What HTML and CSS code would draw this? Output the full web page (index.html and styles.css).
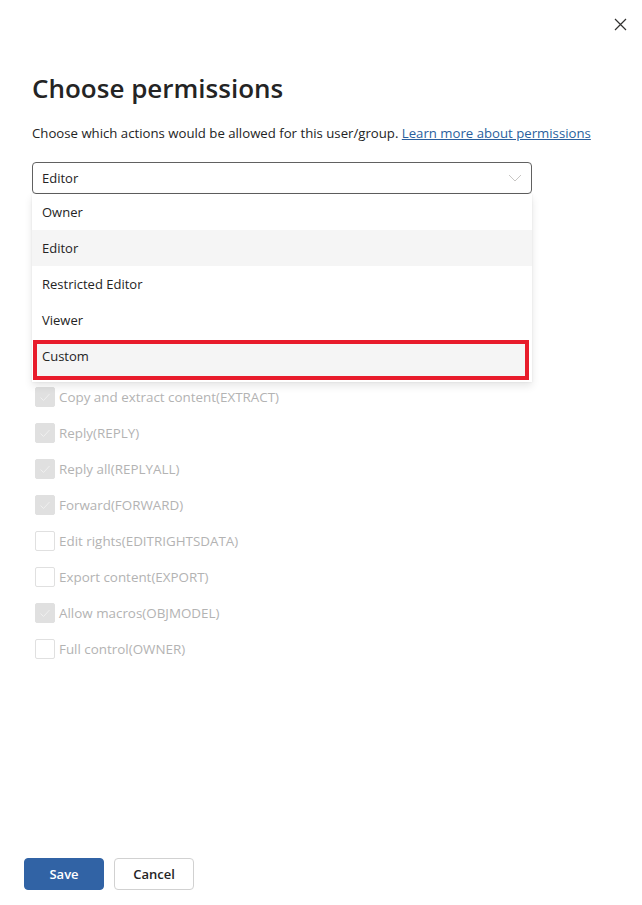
FILE: index.html
```html
<!DOCTYPE html>
<html lang="en">
<head>
<meta charset="utf-8">
<title>Choose permissions</title>
<link rel="stylesheet" href="styles.css">
</head>
<body>
<div class="dialog">
  <div class="header">
    <button class="close" aria-label="Close">
      <svg width="13" height="13" viewBox="0 0 13 13"><path d="M1 1 L12 12 M12 1 L1 12" stroke="#323130" stroke-width="1.2" fill="none"/></svg>
    </button>
  </div>
  <div class="content">
    <h1 class="title">Choose permissions</h1>
    <p class="desc">Choose which actions would be allowed for this user/group. <a class="link" href="#">Learn more about permissions</a></p>
    <div class="dropdown-wrap">
      <div class="dropdown">
        <span class="dropdown-value">Editor</span>
        <svg class="chevron" width="14" height="8" viewBox="0 0 14 8"><path d="M1 1 L7 7 L13 1" stroke="#c8c6c4" stroke-width="1" fill="none"/></svg>
      </div>
      <div class="menu">
        <div class="option">Owner</div>
        <div class="option selected">Editor</div>
        <div class="option">Restricted Editor</div>
        <div class="option">Viewer</div>
        <div class="option custom">Custom</div>
      </div>
    </div>
    <ul class="checks">
      <li class="row"><span class="box checked"><svg width="12" height="12" viewBox="0 0 12 12"><path d="M1.5 6.5 L4.5 9.5 L10.5 3" stroke="#f0f0f0" stroke-width="1" fill="none"/></svg></span><span class="label">Copy and extract content(EXTRACT)</span></li>
      <li class="row"><span class="box checked"><svg width="12" height="12" viewBox="0 0 12 12"><path d="M1.5 6.5 L4.5 9.5 L10.5 3" stroke="#f0f0f0" stroke-width="1" fill="none"/></svg></span><span class="label">Reply(REPLY)</span></li>
      <li class="row"><span class="box checked"><svg width="12" height="12" viewBox="0 0 12 12"><path d="M1.5 6.5 L4.5 9.5 L10.5 3" stroke="#f0f0f0" stroke-width="1" fill="none"/></svg></span><span class="label">Reply all(REPLYALL)</span></li>
      <li class="row"><span class="box checked"><svg width="12" height="12" viewBox="0 0 12 12"><path d="M1.5 6.5 L4.5 9.5 L10.5 3" stroke="#f0f0f0" stroke-width="1" fill="none"/></svg></span><span class="label">Forward(FORWARD)</span></li>
      <li class="row"><span class="box"></span><span class="label">Edit rights(EDITRIGHTSDATA)</span></li>
      <li class="row"><span class="box"></span><span class="label">Export content(EXPORT)</span></li>
      <li class="row"><span class="box checked"><svg width="12" height="12" viewBox="0 0 12 12"><path d="M1.5 6.5 L4.5 9.5 L10.5 3" stroke="#f0f0f0" stroke-width="1" fill="none"/></svg></span><span class="label">Allow macros(OBJMODEL)</span></li>
      <li class="row"><span class="box"></span><span class="label">Full control(OWNER)</span></li>
    </ul>
  </div>
  <div class="footer">
    <button class="btn primary">Save</button>
    <button class="btn secondary">Cancel</button>
  </div>
</div>
</body>
</html>
```

FILE: styles.css
```css
* { box-sizing: border-box; }
html, body { margin: 0; padding: 0; background: #ffffff; }
body {
  font-family: "Open Sans", "Noto Sans", sans-serif;
  color: #242424;
  font-size: 13px;
}
.dialog {
  width: 642px;
  height: 905px;
  display: flex;
  flex-direction: column;
}
.header {
  display: flex;
  justify-content: flex-end;
  padding: 12px 10px 0 0;
}
.close {
  width: 24px;
  height: 24px;
  padding: 0;
  border: none;
  background: transparent;
  display: flex;
  align-items: center;
  justify-content: center;
}
.content {
  padding: 0 110px 0 32px;
}
.title {
  margin: 34px 0 0;
  font-size: 26px;
  line-height: 36px;
  font-weight: 600;
  color: #242424;
}
.desc {
  margin: 17px 0 0;
  font-size: 13.2px;
  line-height: 20px;
  color: #242424;
  white-space: nowrap;
}
.link {
  color: #2a5f9e;
  text-decoration: underline;
}
.dropdown-wrap {
  position: relative;
  margin-top: 19px;
  width: 500px;
}
.dropdown {
  height: 32px;
  border: 1px solid #616161;
  border-radius: 4px;
  display: flex;
  align-items: center;
  justify-content: space-between;
  padding: 0 9px 0 9px;
  font-size: 13px;
}
.menu {
  position: absolute;
  top: 100%;
  left: 0;
  width: 500px;
  background: #ffffff;
  box-shadow: 0 4px 8px rgba(0,0,0,0.10), 0 0 2px rgba(0,0,0,0.08);
  z-index: 2;
  padding-bottom: 2px;
}
.option {
  height: 36px;
  display: flex;
  align-items: center;
  padding-left: 10px;
  font-size: 13px;
  color: #242424;
}
.option.selected { background: #f5f5f5; }
.option.custom {
  margin: 2px 3px 0 1px;
  height: 40px;
  border: 4px solid #e81c2b;
  padding: 0 0 8px 5px;
  background: #f5f5f5;
}
.checks {
  list-style: none;
  margin: 185px 0 0;
  padding: 0 0 0 3px;
}
.row {
  height: 36px;
  display: flex;
  align-items: center;
  gap: 4px;
}
.box {
  width: 20px;
  height: 20px;
  border: 1px solid #e0e0e0;
  border-radius: 2px;
  background: #ffffff;
  display: flex;
  align-items: center;
  justify-content: center;
}
.box.checked {
  background: #e0e0e0;
  border-color: #e0e0e0;
}
.label {
  color: #b3b3b3;
  font-size: 13.4px;
}
.footer {
  margin-top: auto;
  padding: 0 24px 15px;
  display: flex;
  gap: 10px;
}
.btn {
  width: 80px;
  height: 32px;
  border-radius: 4px;
  font-family: "Open Sans", "Noto Sans", sans-serif;
  font-size: 13px;
  font-weight: 600;
}
.primary {
  background: #3163a5;
  border: 1px solid #3163a5;
  color: #ffffff;
}
.secondary {
  background: #ffffff;
  border: 1px solid #d1d1d1;
  color: #242424;
}
```
